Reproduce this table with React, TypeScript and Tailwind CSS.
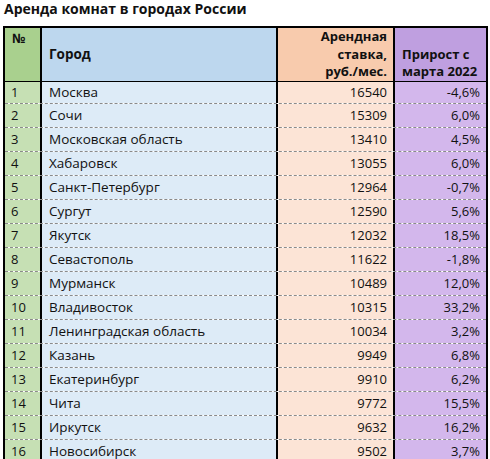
import React from "react";

const rows: [string, string, string, string][] = [
  ["1", "Москва", "16540", "-4,6%"],
  ["2", "Сочи", "15309", "6,0%"],
  ["3", "Московская область", "13410", "4,5%"],
  ["4", "Хабаровск", "13055", "6,0%"],
  ["5", "Санкт-Петербург", "12964", "-0,7%"],
  ["6", "Сургут", "12590", "5,6%"],
  ["7", "Якутск", "12032", "18,5%"],
  ["8", "Севастополь", "11622", "-1,8%"],
  ["9", "Мурманск", "10489", "12,0%"],
  ["10", "Владивосток", "10315", "33,2%"],
  ["11", "Ленинградская область", "10034", "3,2%"],
  ["12", "Казань", "9949", "6,8%"],
  ["13", "Екатеринбург", "9910", "6,2%"],
  ["14", "Чита", "9772", "15,5%"],
  ["15", "Иркутск", "9632", "16,2%"],
  ["16", "Новосибирск", "9502", "3,7%"],
];

export default function App() {
  return (
    <div
      className="w-[490px] h-[459px] overflow-hidden bg-white text-[#111]"
      style={{ fontFamily: '"Open Sans", "Noto Sans", sans-serif' }}
    >
      <div className="h-[26px] pl-[4px] pt-[0px] text-[14px] leading-[18px] font-bold">
        Аренда комнат в городах России
      </div>
      <div className="ml-[3px] w-[485px] border-2 border-black text-[13px]">
        <div className="grid grid-cols-[37px_236px_117px_91px] h-[54px] border-b-2 border-black font-bold leading-[17.5px]">
          <div className="bg-[#a9d08e] border-r-2 border-black pl-[7px] pt-[2px]">№</div>
          <div className="bg-[#bdd7ee] border-r-2 border-black pl-[7px] flex items-center text-[13.5px]">Город</div>
          <div className="bg-[#f8cbad] border-r-2 border-black pr-[6px] flex flex-col justify-end items-end text-right">
            <span>Арендная</span>
            <span>ставка,</span>
            <span>руб./мес.</span>
          </div>
          <div className="bg-[#bf9fe0] pl-[7px] flex flex-col justify-end">
            <span>Прирост с</span>
            <span>марта 2022</span>
          </div>
        </div>
        {rows.map((r, i) => (
          <div
            key={r[0]}
            className={`grid grid-cols-[37px_236px_117px_91px] border-b border-dashed border-[#8a8a8a] ${
              i === 0 ? "h-[22px]" : "h-[24px]"
            }`}
          >
            <div className="bg-[#c6e0b4] border-r-2 border-black pl-[6px] flex items-center">{r[0]}</div>
            <div className="bg-[#ddebf7] border-r-2 border-black pl-[7px] flex items-center text-[13.5px]">{r[1]}</div>
            <div className="bg-[#fce4d6] border-r-2 border-black pr-[6px] flex items-center justify-end">{r[2]}</div>
            <div className="bg-[#d3b7ec] pr-[6px] flex items-center justify-end">{r[3]}</div>
          </div>
        ))}
      </div>
    </div>
  );
}
